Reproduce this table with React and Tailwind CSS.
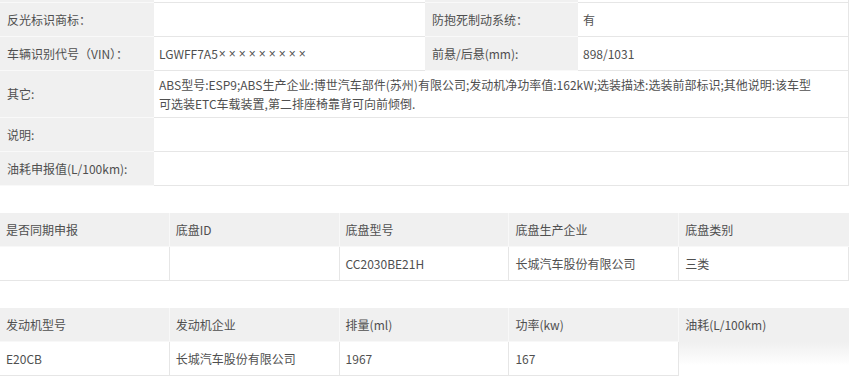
import React from "react";

const font = { fontFamily: '"Noto Sans CJK SC", "Noto Sans", sans-serif' };

function L({ children, className = "" }) {
  return (
    <div className={"flex items-center bg-[#f0f0f0] border-b border-b-[#f9f9f9] pl-[7px] " + className}>
      {children}
    </div>
  );
}
function V({ children, className = "" }) {
  return (
    <div className={"flex items-center bg-white border-b border-b-[#e6e6e6] pl-[5px] " + className}>
      {children}
    </div>
  );
}

function Grid5({ head, row, lastFade }) {
  return (
    <div className="grid grid-cols-5 w-[849px]">
      {head.map((h, i) => (
        <div
          key={"h" + i}
          className={
            "h-[34px] flex items-center pl-[6px] bg-[#f0f0f0] " +
            (i < 4 ? "border-r border-r-[#f8f8f8] " : "") +
            (lastFade && i === 4 ? "" : "border-b border-b-[#f8f8f8]")
          }
        >
          {h}
        </div>
      ))}
      {row.map((v, i) =>
        lastFade && i === 4 ? (
          <div key={"v" + i} className="h-[34px] bg-linear-to-b from-[#f0f0f0] to-white to-70%" />
        ) : (
          <div
            key={"v" + i}
            className={
              "h-[34px] flex items-center pl-[6px] bg-white border-b border-b-[#e6e6e6] " +
              (i < 4 || !lastFade ? "border-r border-r-[#e6e6e6]" : "")
            }
          >
            {v}
          </div>
        )
      )}
    </div>
  );
}

export default function App() {
  return (
    <div className="w-[852px] h-[379px] bg-white text-[12px] text-[#4f4f4f] overflow-hidden" style={font}>
      <div className="grid grid-cols-[154px_271px_153px_271px] w-[849px]">
        <L className="h-[3px]" />
        <V className="h-[3px]" />
        <L className="h-[3px]" />
        <V className="h-[3px] border-r border-r-[#e6e6e6]" />

        <L className="h-[34px]">反光标识商标：</L>
        <V className="h-[34px]"></V>
        <L className="h-[34px]">防抱死制动系统：</L>
        <V className="h-[34px] border-r border-r-[#e6e6e6]">有</V>

        <L className="h-[34px]">车辆识别代号（VIN）：</L>
        <V className="h-[34px]">
          LGWFF7A5
          <span className="font-['Liberation_Sans'] tracking-[3px] ml-[1px]">×××××××××</span>
        </V>
        <L className="h-[34px]">前悬/后悬(mm):</L>
        <V className="h-[34px] border-r border-r-[#e6e6e6]">898/1031</V>

        <L className="h-[47px]">其它:</L>
        <V className="h-[47px] col-span-3 border-r border-r-[#e6e6e6] leading-[19px]">
          <div>
            ABS型号:ESP9;ABS生产企业:博世汽车部件(苏州)有限公司;发动机净功率值:162kW;选装描述:选装前部标识;其他说明:该车型
            <br />
            可选装ETC车载装置,第二排座椅靠背可向前倾倒.
          </div>
        </V>

        <L className="h-[34px]">说明:</L>
        <V className="h-[34px] col-span-3 border-r border-r-[#e6e6e6]"></V>

        <L className="h-[34px]">油耗申报值(L/100km):</L>
        <V className="h-[34px] col-span-3 border-r border-r-[#e6e6e6]"></V>
      </div>

      <div className="mt-[27px]">
        <Grid5
          head={["是否同期申报", "底盘ID", "底盘型号", "底盘生产企业", "底盘类别"]}
          row={["", "", "CC2030BE21H", "长城汽车股份有限公司", "三类"]}
        />
      </div>

      <div className="mt-[27px]">
        <Grid5
          head={["发动机型号", "发动机企业", "排量(ml)", "功率(kw)", "油耗(L/100km)"]}
          row={["E20CB", "长城汽车股份有限公司", "1967", "167", ""]}
          lastFade
        />
      </div>
    </div>
  );
}
